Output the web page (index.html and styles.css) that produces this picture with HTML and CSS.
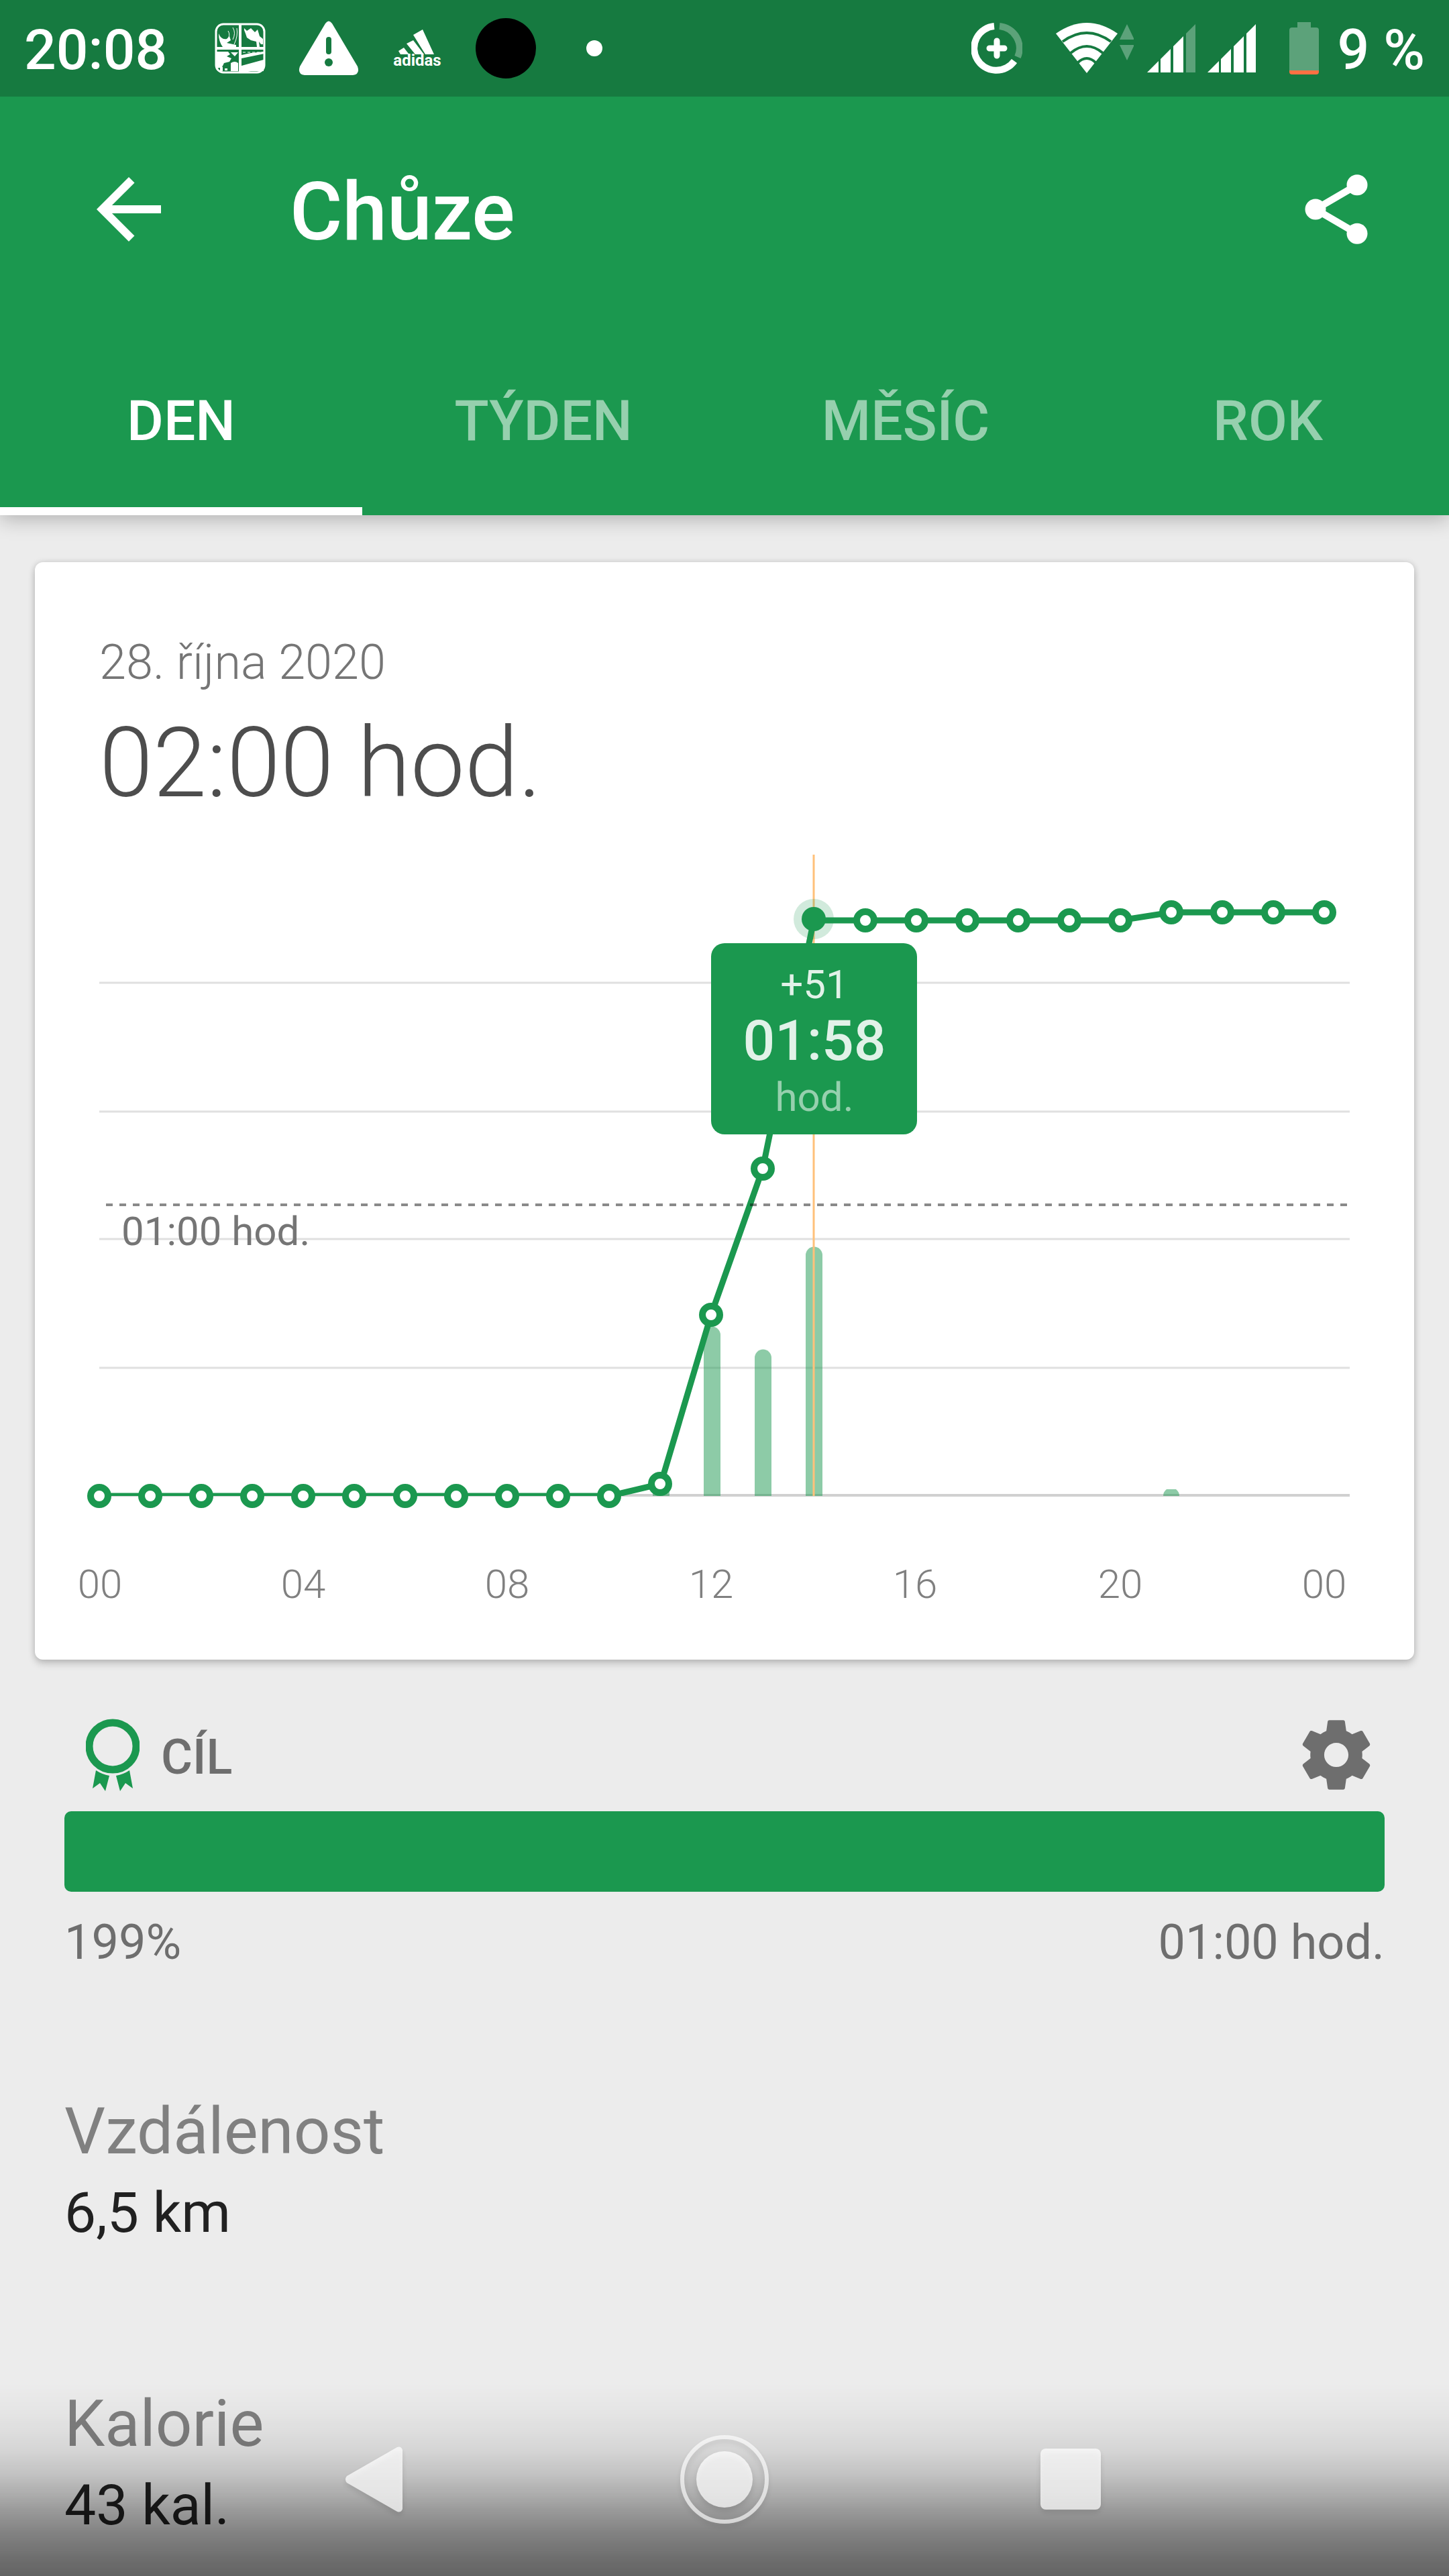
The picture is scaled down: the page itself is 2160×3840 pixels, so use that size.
FILE: index.html
```html
<!DOCTYPE html>
<html lang="cs">
<head>
<meta charset="utf-8">
<meta name="viewport" content="width=device-width, initial-scale=1">
<title>Chůze</title>
<link rel="stylesheet" href="styles.css">
</head>
<body>
<header class="top">
  <div class="status">
    <span class="status-text">20:08</span>
    <div class="notifications">
      <svg width="76" height="76" viewBox="0 0 76 76" fill="#fff">
        <rect x="2" y="2" width="72" height="72" rx="11" fill="none" stroke="#fff" stroke-width="3"/>
        <path d="M2 36h72v4H2zM36 2h4v72h-4z"/>
        <path d="M6 16q4 10 12 8l4-4 2 6-6 4 14 3v3H12q-6-8-6-20z"/>
        <path d="M20 12q4 6-1 14M27 7q5 8 0 18M33 8q2 12-4 24" fill="none" stroke="#fff" stroke-width="1"/>
        <path d="M44 8l4 4 6-4 6 6 4-4 3 10 5 4v8h-3l-3-4 1 8h-4l-1-8-8-2-6-4-2-6-2-5z"/>
        <path d="M3 43h17l3 4-5 3 7 3-3 5-8 2-3 6-8 2zM24 44h11l-5 6zM24 60q6-4 11 0v12H24zM8 66h4v6H8zM15 68h4v3h-4z"/>
        <path d="M40 48l14-3 20-2v3L40 53zM40 64l33-9v17H54q-6 2-14 2z"/>
        <path d="M42 44h30" stroke="#fff" stroke-dasharray="4 3" fill="none"/>
      </svg>
      <svg width="90" height="82" viewBox="0 0 90 82">
        <path fill="#fff" d="M40 4q5-7 10 0l38 64q4 12-7 13H9Q-2 80 2 68z"/>
        <path stroke="#167a40" stroke-width="8" stroke-linecap="round" d="M45 28v18"/>
        <circle cx="45" cy="62" r="6" fill="#167a40"/>
      </svg>
      <svg class="brand" width="74" height="90" viewBox="0 0 74 90" fill="#fff">
        <path d="M9 49l8-5 7 9v1H12zM21 38l10-5 16 21H34zM31 25l14-8 17 37H49z"/>
        <text x="37" y="71" text-anchor="middle">adidas</text>
      </svg>
      <svg width="90" height="90" viewBox="0 0 90 90"><circle cx="45" cy="45" r="45"/></svg>
      <svg width="24" height="24" viewBox="0 0 24 24"><circle cx="12" cy="12" r="12" fill="#fff"/></svg>
    </div>
    <div class="system">
      <svg class="saver" width="76" height="76" viewBox="0 0 76 76" fill="none" stroke="#fff" stroke-width="10">
        <path d="M34 5A33 33 0 1 0 64 57"/>
        <path d="M42 5A33 33 0 0 1 69 51" stroke-opacity=".3"/>
        <path d="M38 27v22M27 38h22" stroke-width="9" stroke-linecap="round"/>
      </svg>
      <svg class="wifi" width="116" height="76" viewBox="0 0 116 76">
        <path fill="#fff" d="M0 16Q46-16 92 16L46 75z"/>
        <path fill="none" stroke="#167a40" stroke-width="4" d="M10 28q36-26 72 0M22 45q24-20 48 0M32 60q14-14 28 0"/>
        <path fill="#5ca27a" d="M106 2l11 23H95zM106 56l11-23H95z"/>
      </svg>
      <svg class="signal" width="72" height="72" viewBox="0 0 72 72" fill="#fff">
        <path d="M0 72l17-17v17zM20 52l15-15v35H20zM39 33l15-15v54H39z"/>
        <path fill="#5ca27a" d="M58 14L72 0v72H58z"/>
      </svg>
      <svg class="signal-full" width="72" height="72" viewBox="0 0 72 72" fill="#fff">
        <path d="M0 72l17-17v17zM20 52l15-15v35H20zM39 33l15-15v54H39zM58 14L72 0v72H58z"/>
      </svg>
      <svg class="battery" width="44" height="78" viewBox="0 0 44 78">
        <path fill="#5ca27a" d="M12 0h20v8h8q4 0 4 4v60H0V12q0-4 4-4h8z"/>
        <path fill="#ff7043" d="M0 72h44v2q0 4-4 4H4q-4 0-4-4z"/>
      </svg>
      <span class="status-text">9 %</span>
    </div>
  </div>
  <div class="toolbar">
    <button class="icon-button" type="button" aria-label="Zpět">
      <svg width="144" height="144" viewBox="0 0 24 24" fill="#fff"><path d="M20 11H7.830l5.590-5.590L12 4l-8 8 8 8 1.410-1.410L7.830 13H20z"/></svg>
    </button>
    <h1 class="title">Chůze</h1>
    <button class="icon-button" type="button" aria-label="Sdílet">
      <svg width="124" height="124" viewBox="0 0 24 24" fill="#fff"><path d="M18 5L6 12l12 7" fill="none" stroke="#fff" stroke-width="2"/><circle cx="18" cy="5" r="3"/><circle cx="6" cy="12" r="3"/><circle cx="18" cy="19" r="3"/></svg>
    </button>
  </div>
  <nav class="tabs">
    <a class="tab tab-active" href="#den" aria-current="page">DEN</a>
    <a class="tab" href="#tyden">TÝDEN</a>
    <a class="tab" href="#mesic">MĚSÍC</a>
    <a class="tab" href="#rok">ROK</a>
  </nav>
</header>

<main>
  <section class="card" id="den">
    <p class="date">28. října 2020</p>
    <h2 class="total">02:00 hod.</h2>
    <svg class="chart" viewBox="0 0 2056 1234" role="img" aria-label="Chůze během dne">
      <defs><clipPath id="plot"><path d="M0 0h2056v990H0z"/></clipPath></defs>
      <path class="grid" d="M96 225h1864M96 417h1864M96 607h1864M96 799h1864"/>
      <path class="axis" d="M96 989h1864"/>
      <g class="bars">
        <path d="M921 990v-6q0-4 4-4h17q4 0 4 4v6z"/>
        <path d="M997 990V750a12 12 0 0 1 25 0v240z"/>
        <path d="M1073 990V784a12 12 0 0 1 25 0v206z"/>
        <path d="M1149 990V631a12 12 0 0 1 25 0v359z"/>
        <path d="M1682 990q0-6 5-10h14q5 4 5 10z"/>
      </g>
      <path class="cursor" d="M1161 34v956"/>
      <circle class="halo" cx="1161" cy="130" r="30"/>
      <polyline class="line" clip-path="url(#plot)" points="96,990 857,990 933,972 1008,720 1085,502 1161,132 1618,132 1694,120 1922,120"/>
      <g class="dots">
        <circle cx="96" cy="990" r="13"/><circle cx="172" cy="990" r="13"/><circle cx="248" cy="990" r="13"/>
        <circle cx="324" cy="990" r="13"/><circle cx="400" cy="990" r="13"/><circle cx="476" cy="990" r="13"/>
        <circle cx="552" cy="990" r="13"/><circle cx="628" cy="990" r="13"/><circle cx="704" cy="990" r="13"/>
        <circle cx="780" cy="990" r="13"/><circle cx="856" cy="990" r="13"/><circle cx="932" cy="972" r="13"/>
        <circle cx="1008" cy="720" r="13"/><circle cx="1085" cy="502" r="13"/><circle cx="1238" cy="132" r="13"/>
        <circle cx="1314" cy="132" r="13"/><circle cx="1390" cy="132" r="13"/><circle cx="1466" cy="132" r="13"/>
        <circle cx="1542" cy="132" r="13"/><circle cx="1618" cy="132" r="13"/><circle cx="1694" cy="120" r="13"/>
        <circle cx="1770" cy="120" r="13"/><circle cx="1846" cy="120" r="13"/><circle cx="1922" cy="120" r="13"/>
      </g>
      <circle class="selected" cx="1161" cy="130" r="18"/>
      <path class="goal-line" d="M106 556h1854"/>
      <text class="goal-label" x="129" y="616">01:00 hod.</text>
      <rect class="tip" x="1008" y="166" width="307" height="285" rx="20"/>
      <g text-anchor="middle">
        <text class="tip-delta" x="1162" y="248">+51</text>
        <text class="tip-value" x="1162" y="340">01:58</text>
        <text class="tip-unit" x="1162" y="416">hod.</text>
      </g>
      <g class="ticks" text-anchor="middle">
        <text x="97" y="1142">00</text>
        <text x="400" y="1142">04</text>
        <text x="704" y="1142">08</text>
        <text x="1008" y="1142">12</text>
        <text x="1312" y="1142">16</text>
        <text x="1618" y="1142">20</text>
        <text x="1922" y="1142">00</text>
      </g>
    </svg>
  </section>

  <section class="goal">
    <div class="goal-head">
      <svg width="80" height="108" viewBox="0 0 80 108" fill="#1b984f">
        <circle cx="40" cy="41" r="35" fill="none" stroke="#1b984f" stroke-width="11"/>
        <path d="M15 77q9 6 20 8l-6 23-8-12-11 8zM65 77q-9 6-20 8l6 23 8-12 11 8z"/>
      </svg>
      <h3 class="goal-title">CÍL</h3>
      <button class="icon-button" type="button" aria-label="Nastavení cíle">
        <svg width="124" height="124" viewBox="0 0 24 24" fill="#6e6e6e"><path d="M19.430 12.980c.04-.32.07-.64.07-.98s-.03-.66-.07-.98l2.110-1.650c.19-.15.24-.42.12-.64l-2-3.460c-.12-.22-.39-.3-.61-.22l-2.490 1c-.52-.4-1.080-.73-1.690-.98l-.38-2.650C14.460 2.180 14.250 2 14 2h-4c-.25 0-.46.18-.49.42l-.38 2.650c-.61.25-1.170.59-1.690.98l-2.490-1c-.23-.09-.49 0-.61.22l-2 3.460c-.13.22-.07.49.12.64l2.110 1.650c-.04.32-.07.65-.07.98s.03.66.07.98l-2.110 1.650c-.19.15-.24.42-.12.64l2 3.460c.12.22.39.3.61.22l2.490-1c.52.4 1.080.73 1.690.98l.38 2.650c.03.24.24.42.49.42h4c.25 0 .46-.18.49-.42l.38-2.650c.61-.25 1.170-.59 1.690-.98l2.490 1c.23.09.49 0 .61-.22l2-3.460c.12-.22.07-.49-.12-.64l-2.110-1.650zM12 15.500c-1.930 0-3.500-1.570-3.500-3.500s1.570-3.500 3.500-3.500 3.500 1.570 3.500 3.500-1.570 3.500-3.500 3.500z"/></svg>
      </button>
    </div>
    <div class="progress" role="progressbar" aria-label="Cíl" aria-valuenow="100"></div>
    <div class="goal-foot"><span>199%</span><span>01:00 hod.</span></div>
  </section>

  <dl class="stats">
    <div>
      <dt>Vzdálenost</dt>
      <dd>6,5 km</dd>
    </div>
    <div>
      <dt>Kalorie</dt>
      <dd>43 kal.</dd>
    </div>
  </dl>
</main>

<nav class="system-nav">
  <button class="icon-button" type="button" aria-label="Zpět">
    <svg width="132" height="132" viewBox="0 0 132 132"><path d="M19 61L94 18q6-2 8 4v88q-2 6-8 4L19 71q-4-5 0-10z"/></svg>
  </button>
  <button class="icon-button" type="button" aria-label="Domů">
    <svg width="132" height="132" viewBox="0 0 132 132"><circle cx="66" cy="66" r="42"/><circle cx="66" cy="66" r="63" class="ring"/></svg>
  </button>
  <button class="icon-button" type="button" aria-label="Přehled">
    <svg width="132" height="132" viewBox="0 0 132 132"><rect x="21" y="20" width="90" height="91" rx="8"/></svg>
  </button>
</nav>
</body>
</html>
```

FILE: styles.css
```css
* {
  box-sizing: border-box;
}

body {
  margin: 0;
  min-height: 100vh;
  background: #ececec;
  font-family: Roboto, "Liberation Sans", sans-serif;
}

h1, h2, h3, p, dl, dd {
  margin: 0;
}

svg {
  display: block;
}

.icon-button {
  padding: 0;
  border: 0;
  background: none;
}

/* Header */

.top {
  background: #1b984f;
  color: #fff;
  box-shadow: 0 6px 28px rgba(0, 0, 0, 0.25);
}

.status {
  display: flex;
  align-items: center;
  height: 144px;
  padding: 0 36px;
  background: #167a40;
}

.status-text {
  padding-top: 6px;
  font-size: 84px;
  font-weight: 500;
  line-height: 96px;
  white-space: nowrap;
}

.notifications {
  display: grid;
  grid-template-columns: repeat(5, 132px);
  place-items: center;
  margin-left: 43px;
}

.brand text {
  font-size: 24px;
  font-weight: 700;
}

.system {
  display: flex;
  align-items: center;
  margin-left: auto;
}

.wifi {
  margin-left: 50px;
}

.signal {
  margin-left: 20px;
}

.signal-full {
  margin-left: 18px;
}

.battery {
  margin: 0 28px 0 50px;
}

.toolbar {
  display: flex;
  align-items: center;
  height: 336px;
  padding: 0 106px 0 120px;
}

.title {
  flex: 1;
  margin-left: 168px;
  padding-top: 8px;
  font-size: 120px;
  font-weight: 500;
  line-height: 144px;
}

.tabs {
  display: grid;
  grid-template-columns: repeat(4, 1fr);
}

.tab {
  height: 288px;
  padding-top: 100px;
  border-bottom: 12px solid transparent;
  color: rgba(255, 255, 255, 0.54);
  font-size: 84px;
  font-weight: 500;
  line-height: 96px;
  text-align: center;
  text-decoration: none;
}

.tab-active {
  border-bottom-color: #fff;
  color: #fff;
}

/* Day card */

.card {
  margin: 70px 52px 0;
  padding-top: 108px;
  border-radius: 12px;
  background: #fff;
  box-shadow: 0 6px 12px rgba(0, 0, 0, 0.18), 0 0 10px rgba(0, 0, 0, 0.12);
}

.date {
  padding: 0 96px;
  color: #757575;
  font-size: 72px;
  font-weight: 300;
  line-height: 84px;
}

.total {
  padding: 24px 96px 18px;
  color: #4d4d4d;
  font-size: 144px;
  font-weight: 300;
  line-height: 168px;
}

.chart {
  width: 100%;
  font-size: 60px;
}

.grid {
  stroke: #e0e0e0;
  stroke-width: 3;
}

.axis {
  stroke: #d0d0d0;
  stroke-width: 4;
}

.bars {
  fill: #1b984f;
  fill-opacity: 0.5;
}

.cursor {
  stroke: #ffc17a;
  stroke-width: 3;
}

.halo {
  fill: #1b984f;
  fill-opacity: 0.2;
}

.line {
  fill: none;
  stroke: #1b984f;
  stroke-width: 9;
}

.dots {
  fill: #fff;
  stroke: #1b984f;
  stroke-width: 10;
}

.selected,
.tip {
  fill: #1b984f;
}

.goal-line {
  stroke: #000;
  stroke-opacity: 0.46;
  stroke-width: 4;
  stroke-dasharray: 10 10;
}

.goal-label {
  fill: #757575;
}

.tip-delta,
.tip-value {
  fill: rgba(255, 255, 255, 0.87);
}

.tip-value {
  font-size: 84px;
  font-weight: 500;
}

.tip-unit {
  fill: rgba(255, 255, 255, 0.54);
}

.ticks {
  fill: #808080;
  font-weight: 300;
}

/* Goal */

.goal {
  padding: 80px 96px 0;
  color: #6e6e6e;
  font-size: 72px;
  line-height: 84px;
}

.goal-head {
  display: flex;
  align-items: center;
  gap: 32px;
  padding: 0 10px 22px 32px;
}

.goal-title {
  flex: 1;
  padding-top: 8px;
  font-size: 72px;
  font-weight: 500;
}

.progress {
  height: 120px;
  border-radius: 10px;
  background: #1b984f;
}

.goal-foot {
  display: flex;
  justify-content: space-between;
  padding-top: 34px;
}

/* Statistics */

.stats {
  display: grid;
  gap: 210px;
  padding: 183px 96px 56px;
}

.stats dt {
  color: #808080;
  font-size: 96px;
  line-height: 112px;
}

.stats dd {
  margin-top: 18px;
  color: #212121;
  font-size: 84px;
  line-height: 96px;
}

/* System navigation drawn over the page */

.system-nav {
  position: fixed;
  right: 0;
  bottom: 0;
  left: 0;
  display: flex;
  justify-content: center;
  gap: 384px;
  padding: 78px 0;
  background: linear-gradient(
    rgba(0, 0, 0, 0),
    rgba(0, 0, 0, 0.03) 17%,
    rgba(0, 0, 0, 0.09) 34%,
    rgba(0, 0, 0, 0.18) 48%,
    rgba(0, 0, 0, 0.27) 58%,
    rgba(0, 0, 0, 0.35) 66%,
    rgba(0, 0, 0, 0.45) 78%,
    rgba(0, 0, 0, 0.53) 90%,
    rgba(0, 0, 0, 0.58)
  );
}

.system-nav svg {
  fill: rgba(255, 255, 255, 0.72);
  filter: drop-shadow(0 5px 4px rgba(0, 0, 0, 0.15));
}

.system-nav .ring {
  fill: none;
  stroke: rgba(255, 255, 255, 0.65);
  stroke-width: 6;
}
```
